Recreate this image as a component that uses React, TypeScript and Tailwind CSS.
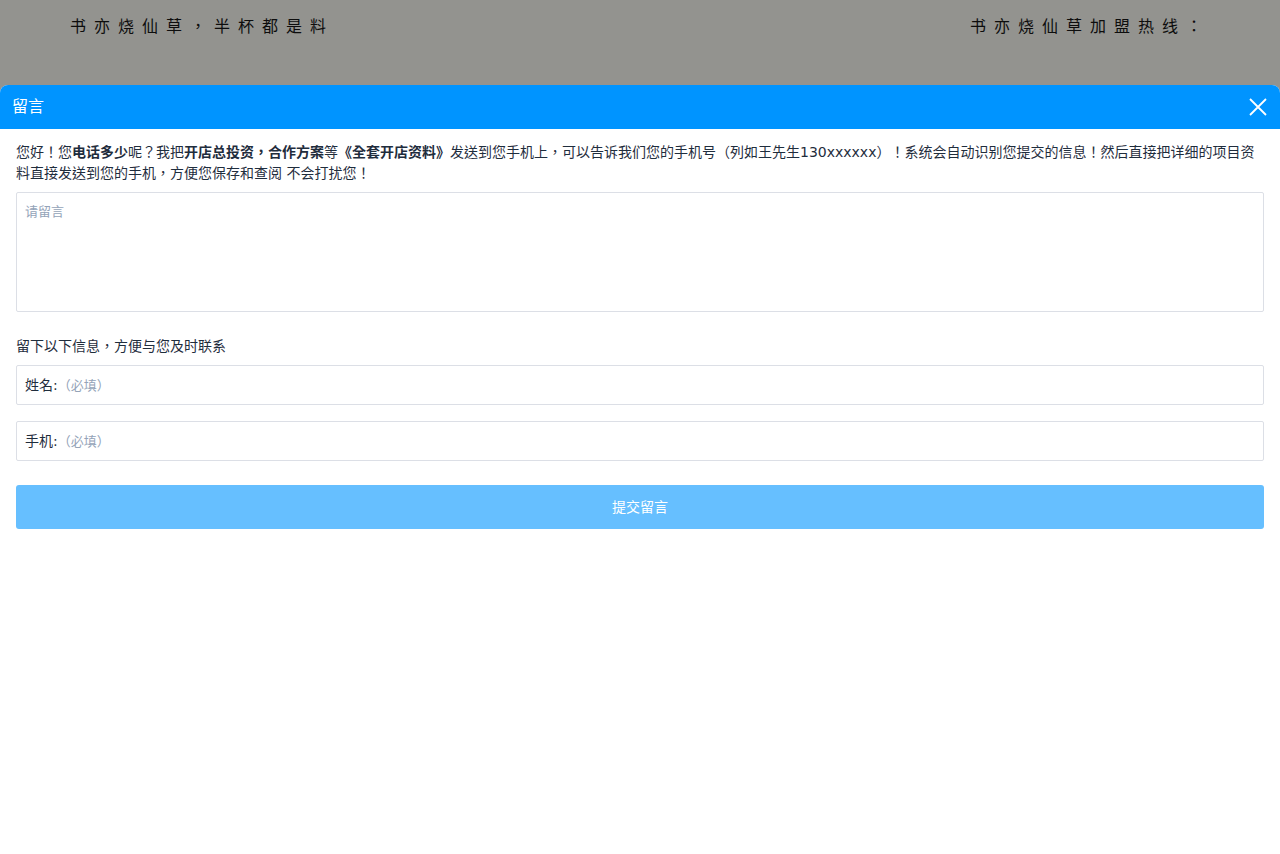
import React from "react";

export default function App() {
  const font = { fontFamily: '"DejaVu Sans","Noto Sans CJK TC",sans-serif' };
  return (
    <div className="w-[1280px] h-[854px] bg-[#93938f] flex flex-col overflow-hidden" style={font}>
      <div className="h-[85px] flex justify-between pl-[70px] pr-[70px] pt-[16px] text-[16px] leading-[22px] text-[#0d0d0d] tracking-[8px]">
        <div>书亦烧仙草，半杯都是料</div>
        <div>书亦烧仙草加盟热线：</div>
      </div>
      <div className="flex-1 bg-white rounded-t-[8px] flex flex-col">
        <div className="h-[44px] bg-[#0094ff] rounded-t-[8px] flex items-center justify-between pl-[12px] pr-[13px]">
          <span className="text-white text-[16px]">留言</span>
          <svg width="18" height="18" viewBox="0 0 18 18" fill="none" stroke="white" strokeWidth="1.8">
            <path d="M1 1L17 17M17 1L1 17" />
          </svg>
        </div>
        <div className="px-[16px] pt-[13px] text-[14px] leading-[21px] text-[#1f2d3d]">
          <p>
            您好！您<b>电话多少</b>呢？我把<b>开店总投资，合作方案</b>等<b>《全套开店资料》</b>发送到您手机上，可以告诉我们您的手机号（列如王先生130xxxxxx）！系统会自动识别您提交的信息！然后直接把详细的项目资料直接发送到您的手机，方便您保存和查阅 不会打扰您！
          </p>
          <div className="mt-[8px] h-[120px] border border-[#dcdfe6] rounded-[2px] px-[8px] py-[8px] text-[#94a3b8] text-[13px]">
            请留言
          </div>
          <div className="mt-[24px] leading-[20px]">留下以下信息，方便与您及时联系</div>
          <div className="mt-[9px] h-[40px] border border-[#dcdfe6] rounded-[2px] px-[8px] flex items-center">
            <span>姓名:</span>
            <span className="text-[#94a3b8] text-[13px]">（必填）</span>
          </div>
          <div className="mt-[16px] h-[40px] border border-[#dcdfe6] rounded-[2px] px-[8px] flex items-center">
            <span>手机:</span>
            <span className="text-[#94a3b8] text-[13px]">（必填）</span>
          </div>
          <div className="mt-[24px] h-[44px] bg-[#66bfff] rounded-[3px] flex items-center justify-center text-white">
            提交留言
          </div>
        </div>
      </div>
    </div>
  );
}
